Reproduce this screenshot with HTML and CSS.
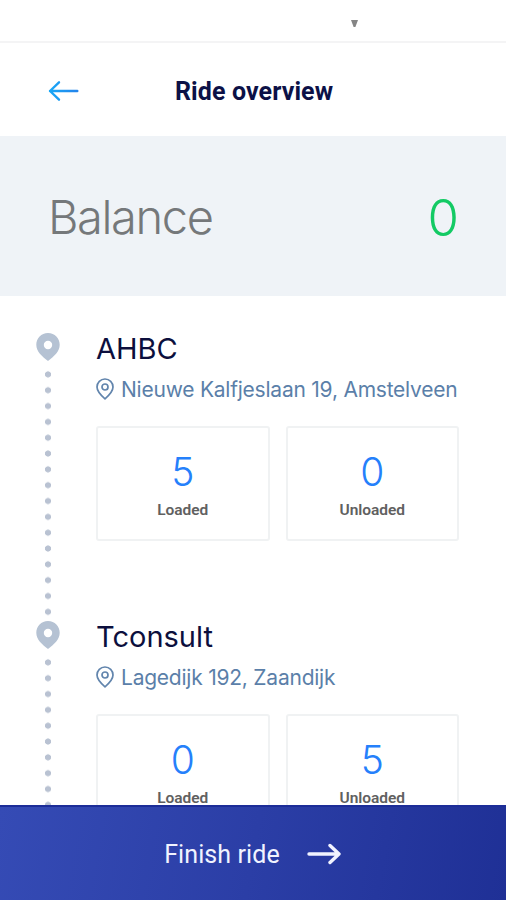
FILE: index.html
```html
<!DOCTYPE html>
<html lang="en">
<head>
<meta charset="utf-8">
<meta name="viewport" content="width=device-width, initial-scale=1">
<title>Ride overview</title>
<link rel="stylesheet" href="styles.css">
</head>
<body>
<div class="app">
  <div class="status-bar">
    <svg class="caret" width="7" height="7" viewBox="0 0 7 7"><path d="M0 0H7L4.4 7H2.6Z" fill="#858585"/></svg>
  </div>
  <header class="header">
    <svg class="back" width="32" height="22" viewBox="0 0 32 22" fill="none" stroke="url(#back-fill)" stroke-width="2.4" stroke-linecap="round" stroke-linejoin="round">
      <defs><linearGradient id="back-fill" gradientUnits="userSpaceOnUse" x1="1" y1="0" x2="30" y2="0"><stop stop-color="#18a9f7"/><stop offset="1" stop-color="#2385ec"/></linearGradient></defs>
      <path d="M12 2.3L3 11L12 19.7M3 11H30.3"/>
    </svg>
    <h1 class="title">Ride overview</h1>
  </header>
  <section class="balance">
    <span class="balance-label">Balance</span>
    <span class="balance-value">0</span>
  </section>
  <main class="stops">
    <article class="stop">
      <div class="rail">
        <svg class="marker" width="24" height="28" viewBox="0 0 24 28"><path fill="#b5c2d3" fill-rule="evenodd" d="M12 0C5.2 0 .3 5.2.3 11.8C.3 18.8 6 23.2 12 28C18 23.2 23.7 18.8 23.7 11.8C23.7 5.2 18.8 0 12 0ZM12 7.8a4.2 4.2 0 1 1 0 8.4a4.2 4.2 0 1 1 0-8.4Z"/></svg>
        <div class="dots"></div>
      </div>
      <div class="details">
        <h2 class="name">AHBC</h2>
        <p class="address">
          <svg class="pin" width="18" height="22" viewBox="0 0 18 22" fill="none" stroke="#6285ad" stroke-width="1.7" stroke-linejoin="round"><path d="M9 1C4.5 1 1 4.5 1 9C1 13.8 4.8 17.2 9 20.8C13.2 17.2 17 13.8 17 9C17 4.5 13.5 1 9 1Z"/><circle cx="9" cy="9" r="3"/></svg>
          <span class="street">Nieuwe Kalfjeslaan 19, Amstelveen</span>
        </p>
        <div class="counts">
          <div class="count"><span class="number">5</span><span class="label">Loaded</span></div>
          <div class="count"><span class="number">0</span><span class="label">Unloaded</span></div>
        </div>
      </div>
    </article>
    <article class="stop">
      <div class="rail">
        <svg class="marker" width="24" height="28" viewBox="0 0 24 28"><path fill="#b5c2d3" fill-rule="evenodd" d="M12 0C5.2 0 .3 5.2.3 11.8C.3 18.8 6 23.2 12 28C18 23.2 23.7 18.8 23.7 11.8C23.7 5.2 18.8 0 12 0ZM12 7.8a4.2 4.2 0 1 1 0 8.4a4.2 4.2 0 1 1 0-8.4Z"/></svg>
        <div class="dots"></div>
      </div>
      <div class="details">
        <h2 class="name">Tconsult</h2>
        <p class="address">
          <svg class="pin" width="18" height="22" viewBox="0 0 18 22" fill="none" stroke="#6285ad" stroke-width="1.7" stroke-linejoin="round"><path d="M9 1C4.5 1 1 4.5 1 9C1 13.8 4.8 17.2 9 20.8C13.2 17.2 17 13.8 17 9C17 4.5 13.5 1 9 1Z"/><circle cx="9" cy="9" r="3"/></svg>
          <span class="street">Lagedijk 192, Zaandijk</span>
        </p>
        <div class="counts">
          <div class="count"><span class="number">0</span><span class="label">Loaded</span></div>
          <div class="count"><span class="number">5</span><span class="label">Unloaded</span></div>
        </div>
      </div>
    </article>
  </main>
  <footer class="finish">
    <span class="finish-text">Finish ride</span>
    <svg width="34" height="22" viewBox="0 0 34 22" fill="none" stroke="#f1f3ff" stroke-width="3.4" stroke-linecap="round" stroke-linejoin="round"><path d="M2 11H32M23 2.5L32 11L23 19.5"/></svg>
  </footer>
</div>
</body>
</html>
```
FILE: styles.css
```css
* { box-sizing: border-box; }
body { margin: 0; background: #fff; font-family: Inter, Roboto, sans-serif; }
h1, h2, p { margin: 0; }
svg { display: block; flex: none; }

.app { height: 900px; display: flex; flex-direction: column; overflow: hidden; }

.status-bar { flex: none; height: 43px; border-bottom: 2px solid #f4f4f5; padding: 20px 0 0 351px; }

.header { flex: none; height: 93px; display: flex; align-items: center; padding-left: 48px; }
.back { margin: 2px 1px 0 -1px; }
.title { margin: 5px 0 0 95px; font: 700 25px/30px Roboto, sans-serif; letter-spacing: .1px; color: #0c1147; white-space: nowrap; }

.balance { flex: none; height: 160px; background: #eff3f7; display: flex; justify-content: space-between; align-items: center; padding: 0 47px 0 48px; }
.balance-label { margin-top: 2px; font-size: 47px; font-weight: 300; line-height: 56px; color: #75787a; letter-spacing: -1.4px; }
.balance-value { margin-top: 4px; font-size: 51px; font-weight: 300; line-height: 60px; color: #13ca64; }

.stops { flex: 1; min-height: 0; overflow: hidden; padding: 37px 47px 0 36px; }
.stop { height: 288px; display: flex; gap: 36px; }
.rail { flex: none; width: 24px; display: flex; flex-direction: column; }
.dots { flex: 1; margin-top: 5px; background: radial-gradient(circle at 12px 8.4px, #b9c2d2 2.7px, transparent 3.4px) 0 0 / 24px 15.83px repeat-y; }

.details { flex: 1; min-width: 0; }
.name { font-size: 29px; font-weight: 400; line-height: 32px; color: #0c0f3d; }
.address { display: flex; align-items: center; gap: 7px; height: 30px; margin-top: 9px; color: #5b7fa9; }
.street { margin-top: 2px; font-size: 21px; line-height: 28px; letter-spacing: -.23px; white-space: nowrap; }
.counts { display: grid; grid-template-columns: 1fr 1fr; gap: 16px; margin-top: 22px; }
.count { height: 115px; border: 2px solid #f0f2f3; border-radius: 3px; display: flex; flex-direction: column; align-items: center; }
.number { margin-top: 21px; font-size: 39px; font-weight: 300; line-height: 46px; color: #2580fb; }
.label { margin-top: 5px; font: 600 15.5px/20px Roboto, sans-serif; letter-spacing: -.05px; color: #606060; }

.finish { flex: none; height: 95px; border-top: 2px solid #1c2d98; background: linear-gradient(100deg, #354bb5, #2b3ea6 50%, #1f3096); display: flex; align-items: center; justify-content: center; gap: 27px; padding-right: 1px; }
.finish-text { margin-top: 3px; font: 400 25px/30px Roboto, sans-serif; letter-spacing: .1px; color: #f1f3ff; white-space: nowrap; }
```
